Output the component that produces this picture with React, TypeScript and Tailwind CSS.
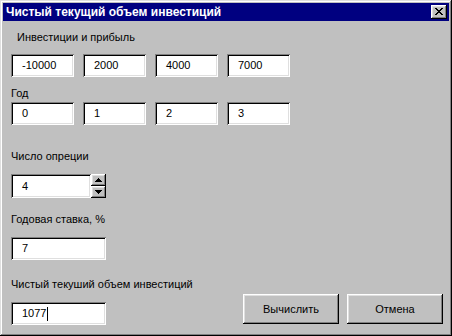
import React from 'react';

const RAISED =
  'shadow-[inset_-1px_-1px_#000,inset_1px_1px_#fff,inset_-2px_-2px_#808080,inset_2px_2px_#dfdfdf]';
const SUNKEN =
  'shadow-[inset_1px_1px_#808080,inset_-1px_-1px_#fff,inset_2px_2px_#000,inset_-2px_-2px_#dfdfdf]';

function Edit({ value, w, h = 23, caret = false }: { value: string; w: string; h?: number; caret?: boolean }) {
  return (
    <div
      className={`${w} ${h === 24 ? 'h-[24px]' : 'h-[23px]'} bg-white ${SUNKEN} flex items-center pl-[11px] text-[11px] leading-[13px] text-black`}
    >
      <span>{value}</span>
      {caret && <span className="ml-[1px] w-px h-[14px] bg-black" />}
    </div>
  );
}

function Label({ children, className = '' }: { children: React.ReactNode; className?: string }) {
  return <div className={`text-[11px] leading-[13px] text-black whitespace-nowrap ${className}`}>{children}</div>;
}

function Button({ children }: { children: React.ReactNode }) {
  return (
    <div className={`w-[96px] h-[30px] bg-[#c0c0c0] ${RAISED} flex items-center justify-center text-[11px] text-black`}>
      {children}
    </div>
  );
}

export default function App() {
  const invest = ['-10000', '2000', '4000', '7000'];
  const years = ['0', '1', '2', '3'];

  return (
    <div
      className="w-[452px] h-[336px] bg-[#c0c0c0] p-[3px] shadow-[inset_-1px_-1px_#000,inset_1px_1px_#dfdfdf,inset_-2px_-2px_#808080,inset_2px_2px_#fff] flex flex-col"
      style={{ fontFamily: '"Liberation Sans", Arial, sans-serif' }}
    >
      {/* Title bar */}
      <div className="h-[18px] bg-[#000080] flex items-center justify-between pl-[3px] pr-[2px]">
        <span className="text-white font-bold text-[12px] leading-[14px]">Чистый текущий объем инвестиций</span>
        <div className={`w-[16px] h-[14px] bg-[#c0c0c0] ${RAISED} flex items-center justify-center`}>
          <svg width="8" height="7" viewBox="0 0 8 7" className="ml-[-1px] mt-[-1px]" shapeRendering="crispEdges">
            <path d="M0 0h2v1h-2zM6 0h2v1h-2zM1 1h2v1h-2zM5 1h2v1h-2zM2 2h4v1h-4zM3 3h2v1h-2zM2 4h4v1h-4zM1 5h2v1h-2zM5 5h2v1h-2zM0 6h2v1h-2zM6 6h2v1h-2z" fill="#000" />
          </svg>
        </div>
      </div>

      {/* Body */}
      <div className="flex flex-col pl-[8px]">
        <Label className="mt-[10px] ml-[6px]">Инвестиции и прибыль</Label>
        <div className="flex gap-[9px] mt-[10px]">
          {invest.map((v) => (
            <Edit key={v} value={v} w="w-[63px]" />
          ))}
        </div>

        <Label className="mt-[10px]">Год</Label>
        <div className="flex gap-[9px] mt-[2px]">
          {years.map((v) => (
            <Edit key={v} value={v} w="w-[63px]" />
          ))}
        </div>

        <Label className="mt-[25px]">Число опреции</Label>
        <div className="flex mt-[11px]">
          <Edit value="4" w="w-[80px]" h={24} />
          <div className="flex flex-col">
            <div className={`w-[15px] h-[12px] bg-[#c0c0c0] ${RAISED} flex items-center justify-center`}>
              <svg width="7" height="4" viewBox="0 0 7 4" shapeRendering="crispEdges">
                <path d="M3 0h1v1h-1zM2 1h3v1h-3zM1 2h5v1h-5zM0 3h7v1h-7z" fill="#000" />
              </svg>
            </div>
            <div className={`w-[15px] h-[12px] bg-[#c0c0c0] ${RAISED} flex items-center justify-center`}>
              <svg width="7" height="4" viewBox="0 0 7 4" shapeRendering="crispEdges">
                <path d="M0 0h7v1h-7zM1 1h5v1h-5zM2 2h3v1h-3zM3 3h1v1h-1z" fill="#000" />
              </svg>
            </div>
          </div>
        </div>

        <Label className="mt-[15px]">Годовая ставка, %</Label>
        <div className="mt-[11px]">
          <Edit value="7" w="w-[95px]" />
        </div>

        <div className="flex items-end mt-[18px]">
          <div className="flex flex-col w-[95px]">
            <Label>Чистый текуший объем инвестиций</Label>
            <div className="mt-[11px]">
              <Edit value="1077" w="w-[95px]" caret />
            </div>
          </div>
          <div className="flex gap-[8px] ml-[137px] mb-[1px]">
            <Button>Вычислить</Button>
            <Button>Отмена</Button>
          </div>
        </div>
      </div>
    </div>
  );
}
